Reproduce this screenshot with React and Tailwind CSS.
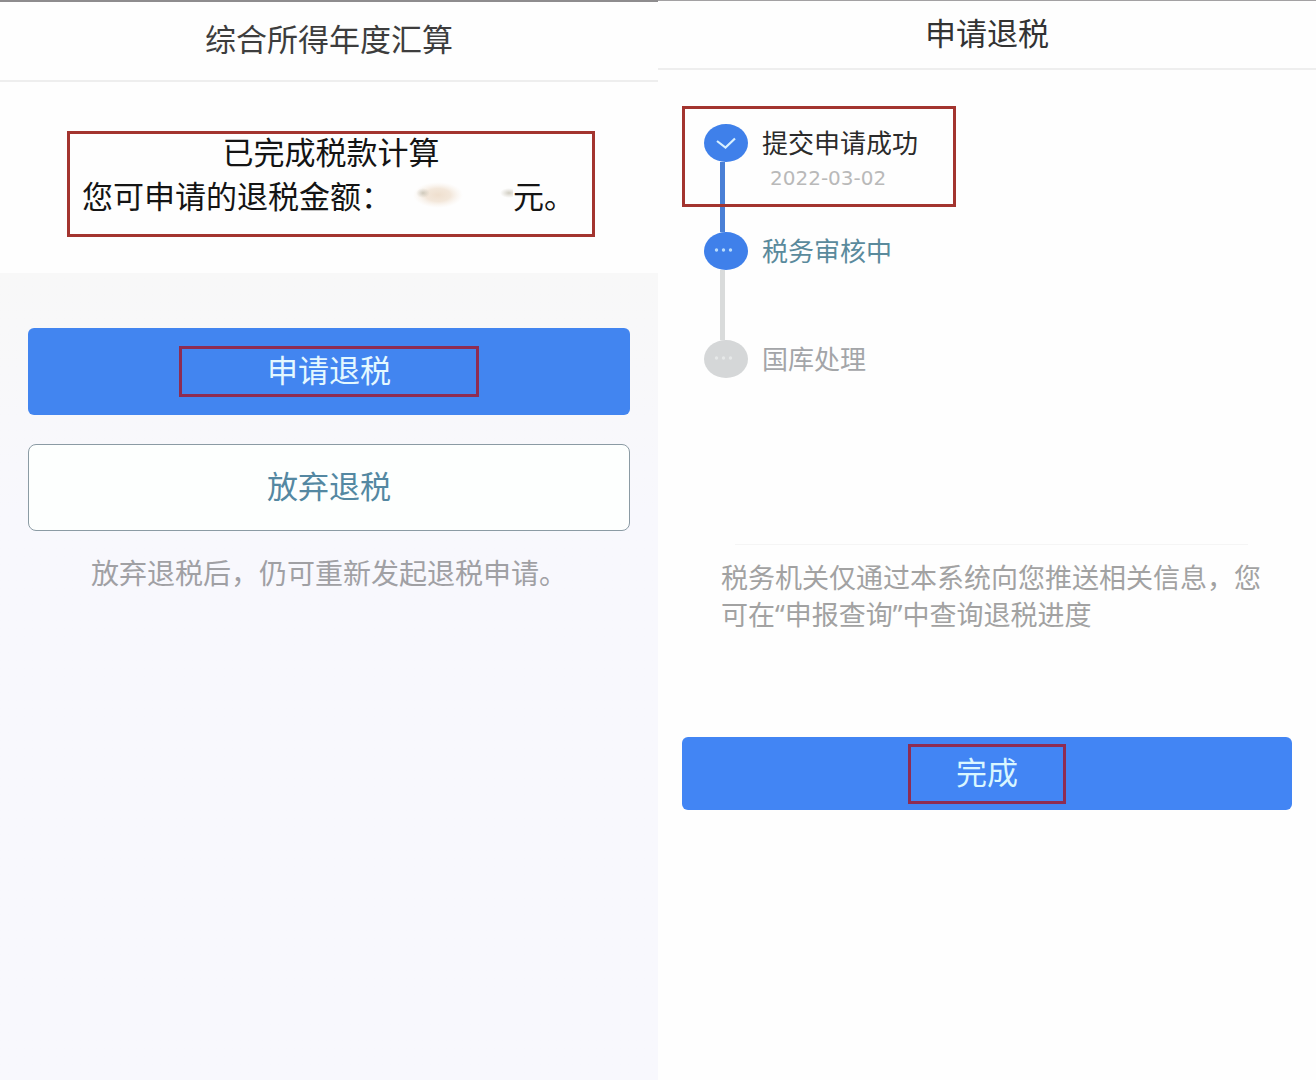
import React from 'react';

const steps = [
  { label: '提交申请成功', date: '2022-03-02', status: 'done' },
  { label: '税务审核中', status: 'active' },
  { label: '国库处理', status: 'pending' },
];

const dotStyles = {
  done: 'bg-[#3f80ea]',
  active: 'bg-[#3f80ea]',
  pending: 'bg-[#d5d7d8]',
};

const lineStyles = {
  done: 'bg-[#4a80d6]',
  active: 'bg-[#d9dbdb]',
};

const labelStyles = {
  done: 'text-[#2b2b2b]',
  active: 'text-[#5a8a9c]',
  pending: 'text-[#a3a5a8]',
};

const StepIcon = ({ status }) => (
  <svg viewBox="0 0 44 38" className="h-full w-full" fill="none" aria-hidden="true">
    {status === 'done' ? (
      <path d="M13 17l8.500 6.500 9.500-9" stroke="#d8f0ff" strokeWidth="2.200" />
    ) : (
      <g fill={status === 'active' ? '#b9dcfb' : '#e6e8e8'}>
        <circle cx="12.500" cy="18" r="1.700" />
        <circle cx="19.500" cy="18" r="1.700" />
        <circle cx="26.500" cy="18" r="1.700" />
      </g>
    )}
  </svg>
);

// The refund amount is rubbed out, only faint smudges are left
const HiddenAmount = () => (
  <svg viewBox="0 0 121 44" className="h-11 w-[121px] shrink-0" aria-hidden="true">
    <defs>
      <radialGradient id="smudge">
        <stop offset="0" stopColor="#efdfce" />
        <stop offset="0.5" stopColor="#f1e3d4" stopOpacity="0.85" />
        <stop offset="1" stopColor="#f8efe6" stopOpacity="0" />
      </radialGradient>
      <radialGradient id="smudgeDark">
        <stop offset="0" stopColor="#bdb8a8" stopOpacity="0.7" />
        <stop offset="1" stopColor="#c9c4b6" stopOpacity="0" />
      </radialGradient>
    </defs>
    <ellipse cx="46" cy="21" rx="25" ry="13" fill="url(#smudge)" />
    <ellipse cx="31" cy="19" rx="7" ry="5" fill="url(#smudgeDark)" />
    <ellipse cx="117" cy="19" rx="9" ry="5" fill="url(#smudgeDark)" />
  </svg>
);

const SettlementScreen = () => (
  <main className="flex flex-col border-t-2 border-[#8e8c8e] bg-[#f8f8fd]">
    <header className="flex h-20 items-center justify-center border-b-2 border-[#eeeeee] bg-[#fefefe] pb-1">
      <h1 className="text-[31px] leading-11 text-[#3d3d3d]">综合所得年度汇算</h1>
    </header>

    <section className="bg-[#fefefe] pt-[49px] pb-9">
      <div className="mr-[63px] ml-[67px] h-[106px] border-[3px] border-[#a3342f] text-[31px] leading-11 whitespace-nowrap text-[#141414]">
        <p className="-mt-1 text-center">已完成税款计算</p>
        <p className="flex pl-3">
          <span>您可申请的退税金额：</span>
          <HiddenAmount />
          <span>元。</span>
        </p>
      </div>
    </section>

    <section className="flex flex-1 flex-col bg-linear-to-b from-[#f8f8f8] to-[#f8f8fd] to-30% px-7 pt-[55px]">
      <button
        type="button"
        className="flex h-[87px] w-full items-center justify-center rounded-md bg-[#4285f0] text-[31px] leading-11 text-[#e4f8ff]"
      >
        <span className="flex h-[51px] w-[300px] items-center justify-center border-[3px] border-[#8e2c52] pb-1">
          申请退税
        </span>
      </button>
      <button
        type="button"
        className="mt-[29px] h-[87px] w-full rounded-lg border border-[#8b9ba4] bg-[#fdfffe] pb-1 text-[31px] leading-11 text-[#5488a2]"
      >
        放弃退税
      </button>
      <p className="mt-5 text-center text-[28px] leading-11 text-[#a0a0a4]">
        放弃退税后，仍可重新发起退税申请。
      </p>
    </section>
  </main>
);

const ProgressScreen = () => (
  <main className="flex flex-col border-t border-[#a3a1a3] bg-[#fefefe]">
    <header className="flex h-[69px] items-center justify-center border-b-2 border-[#eeeeee] pb-1">
      <h1 className="text-[31px] leading-11 text-[#333333]">申请退税</h1>
    </header>

    <ol className="mt-[54px] ml-[46px]">
      {steps.map((step) => (
        <li key={step.label} className={`relative flex gap-3.5 ${lineStyles[step.status] ? 'h-27' : ''}`}>
          <div className="flex w-11 flex-col">
            <div className={`h-[38px] w-11 shrink-0 rounded-[50%] ${dotStyles[step.status]}`}>
              <StepIcon status={step.status} />
            </div>
            {lineStyles[step.status] && (
              <div className={`ml-4 w-[5px] flex-1 ${lineStyles[step.status]}`} />
            )}
          </div>
          <div>
            <p className={`text-[26px] leading-[38px] ${labelStyles[step.status]}`}>{step.label}</p>
            {step.date && (
              <time className="block pl-2 font-['DejaVu_Sans',sans-serif] text-[20px] leading-8 text-[#b9b9b9]">
                {step.date}
              </time>
            )}
          </div>
          {step.status === 'done' && (
            <span className="absolute -top-[18px] -left-[22px] h-[101px] w-[274px] border-[3px] border-[#a3342f]" />
          )}
        </li>
      ))}
    </ol>

    <hr className="mt-[166px] mr-17 ml-[77px] border-[#f5f5f5]" />
    <p className="mt-3.5 pr-[55px] pl-[63px] text-[27px] leading-[37px] text-[#a2a2a2]">
      税务机关仅通过本系统向您推送相关信息，您可在“申报查询”中查询退税进度
    </p>

    <div className="mt-26 px-6">
      <button
        type="button"
        className="flex h-[73px] w-full items-center justify-center rounded-md bg-[#4285f4] text-[31px] leading-11 text-[#d9f6ff]"
      >
        <span className="flex h-15 w-[158px] items-center justify-center border-[3px] border-[#8e2c52] pb-1">
          完成
        </span>
      </button>
    </div>
  </main>
);

const App = () => {
  return (
    <div
      lang="zh-CN"
      className="grid min-h-screen grid-cols-2 font-['Noto_Sans','Noto_Sans_CJK_SC',sans-serif]"
    >
      <SettlementScreen />
      <ProgressScreen />
    </div>
  );
};

export default App;
